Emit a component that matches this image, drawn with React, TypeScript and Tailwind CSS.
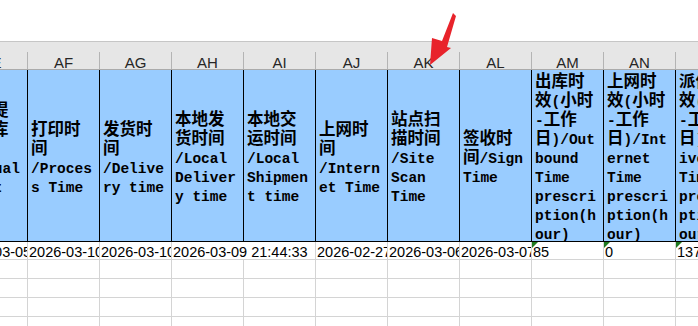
import React from 'react';

const COLS = ['AE', 'AF', 'AG', 'AH', 'AI', 'AJ', 'AK', 'AL', 'AM', 'AN', 'AO'];

// header text, already broken into the lines the sheet wraps to
const HEADERS: string[][] = [
  ['实际提', '货出库', '时间', '/Actual', 'Depot', 'Time'],
  ['打印时', '间', '/Proces', 's Time'],
  ['发货时', '间', '/Delive', 'ry time'],
  ['本地发', '货时间', '/Local', 'Deliver', 'y time'],
  ['本地交', '运时间', '/Local', 'Shipmen', 't time'],
  ['上网时', '间', '/Intern', 'et Time'],
  ['站点扫', '描时间', '/Site', 'Scan', 'Time'],
  ['签收时', '间/Sign', 'Time'],
  ['出库时', '效(小时', '-工作', '日)/Out', 'bound', 'Time', 'prescri', 'ption(h', 'our)'],
  ['上网时', '效(小时', '-工作', '日)/Int', 'ernet', 'Time', 'prescri', 'ption(h', 'our)'],
  ['派件时', '效(小时', '-工作', '日)/Del', 'ivery', 'Time', 'prescri', 'ption(h', 'our)'],
];

// data row: AH spills over the empty AI cell
const DATA: { value: string; width: string; flag?: boolean }[] = [
  { value: '2026-03-05 10:21:12', width: 'w-[72px]' },
  { value: '2026-03-10 08:12:45', width: 'w-[72px]' },
  { value: '2026-03-10 09:30:02', width: 'w-[72px]' },
  { value: '2026-03-09 21:44:33', width: 'w-[144px]' },
  { value: '2026-02-27 16:05:19', width: 'w-[72px]' },
  { value: '2026-03-06 11:48:50', width: 'w-[72px]' },
  { value: '2026-03-07 14:22:08', width: 'w-[72px]' },
  { value: '85', width: 'w-[72px]', flag: true },
  { value: '0', width: 'w-[72px]', flag: true },
  { value: '137', width: 'w-[72px]', flag: true },
];

const CJK = /[\u3400-\u9fff]/;

function HeadLine({ text }: { text: string }) {
  const runs = text.match(/[\u3400-\u9fff]+|[^\u3400-\u9fff]+/g) ?? [];
  return (
    <div className="h-[19px] pt-[4px] leading-[19px] whitespace-pre">
      {runs.map((run, i) =>
        CJK.test(run) ? (
          <span key={i} className="font-['Noto_Sans_CJK_SC',sans-serif] text-[16.5px] leading-[0]">
            {run}
          </span>
        ) : (
          <span key={i}>{run}</span>
        )
      )}
    </div>
  );
}

export default function App() {
  return (
    <div className="relative w-[698px] h-[326px] overflow-hidden bg-white font-['Liberation_Sans',sans-serif]">
      <div className="h-[41px]" />

      {/* column letters */}
      <div className="flex ml-[-45px] h-[29px] bg-[#e6e6e6] border-t border-b border-t-[#c6c6c6] border-b-[#ababab]">
        {COLS.map((c) => (
          <div key={c} className="w-[72px] shrink-0 flex">
            <div className="w-px mt-[10px] bg-[#b4b4b4]" />
            <div className="flex-1 text-center pt-[13px] text-[15px] leading-[15px] text-[#262626]">{c}</div>
          </div>
        ))}
      </div>

      {/* header row */}
      <div className="flex ml-[-45px] h-[172px] border-b border-black font-['Liberation_Mono',monospace] font-bold text-[14.5px] text-black">
        {HEADERS.map((lines, i) => (
          <div
            key={i}
            className="w-[72px] shrink-0 bg-[#99ccff] border-l border-black pl-[3px] flex flex-col justify-center overflow-hidden"
          >
            {lines.map((l, j) => (
              <HeadLine key={j} text={l} />
            ))}
          </div>
        ))}
      </div>

      {/* data row */}
      <div className="flex ml-[-45px] h-[18px] border-b border-[#d4d4d4]">
        {DATA.map((d, i) => (
          <div
            key={i}
            className={`${d.width} relative shrink-0 border-l border-[#d4d4d4] overflow-hidden whitespace-nowrap pl-[1px] pt-[3px] text-[14.5px] leading-[14px] text-black`}
          >
            {d.flag && (
              <span className="absolute left-0 top-0 w-0 h-0 border-t-[6px] border-r-[6px] border-t-[#1f7a1f] border-r-transparent" />
            )}
            {d.value}
          </div>
        ))}
      </div>

      {/* empty rows */}
      {[0, 1, 2, 3].map((r) => (
        <div key={r} className="flex ml-[-45px] h-[19px] border-b border-[#d4d4d4]">
          {COLS.map((c) => (
            <div key={c} className="w-[72px] shrink-0 border-l border-[#d4d4d4]" />
          ))}
        </div>
      ))}

      {/* red annotation arrow */}
      <svg className="absolute left-0 top-0 pointer-events-none" width="698" height="80">
        <polygon points="430,65 432,38 442,41 453,13 456,16 447,47 451,48" fill="#e8232b" />
      </svg>
    </div>
  );
}
